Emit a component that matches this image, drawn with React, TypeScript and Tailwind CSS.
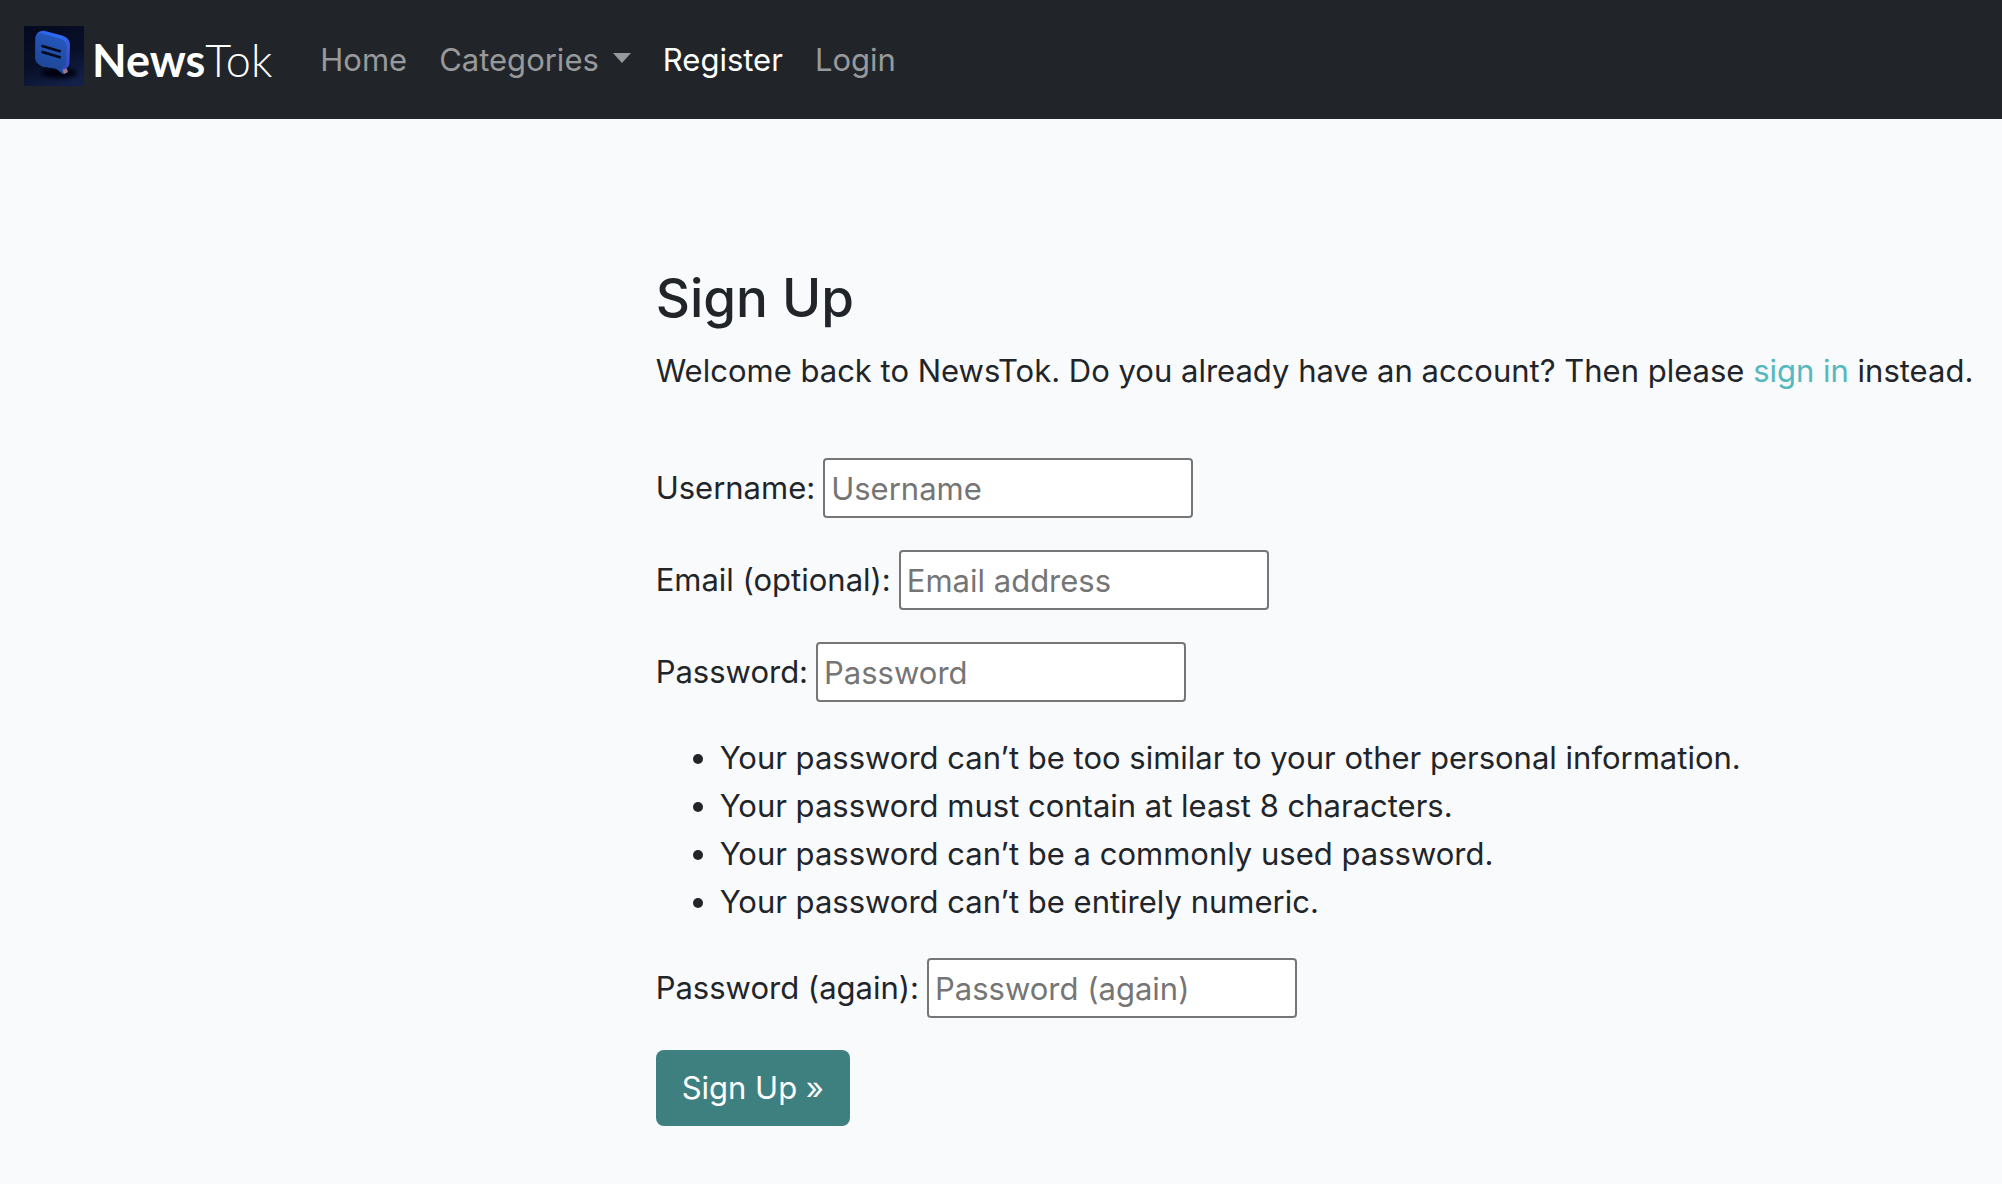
function Logo() {
  return (
    <svg viewBox="0 0 60 60" className="size-[60px] shrink-0" aria-hidden="true">
      <defs>
        <linearGradient id="night" x1="0.3" y1="0" x2="0.7" y2="1">
          <stop offset="0" stopColor="#050a20" />
          <stop offset="0.55" stopColor="#081029" />
          <stop offset="1" stopColor="#13204a" />
        </linearGradient>
        <linearGradient id="side" x1="0" y1="0" x2="1" y2="0.8">
          <stop offset="0" stopColor="#2a62e6" />
          <stop offset="0.5" stopColor="#2f6cf5" />
          <stop offset="1" stopColor="#3d48c0" />
        </linearGradient>
        <linearGradient id="face" x1="0.6" y1="0" x2="0.3" y2="1">
          <stop offset="0" stopColor="#2557be" />
          <stop offset="1" stopColor="#1c4592" />
        </linearGradient>
        <filter id="soft" x="-30%" y="-60%" width="160%" height="220%">
          <feGaussianBlur stdDeviation="2" />
        </filter>
      </defs>
      <rect width="60" height="60" fill="url(#night)" />
      <ellipse cx="35" cy="47" rx="18" ry="5" fill="#03050f" filter="url(#soft)" />
      <path
        d="M11.5 13C11.5 8 15 4 20 4.8L38 9.5C43 11 46 14 46 19L45.500 36C45.500 39 44.500 41 42.500 42L43.500 46.500L39 48L33 42.500L19 40.500C14 38 11.500 36 11.500 32Z"
        fill="url(#side)"
      />
      <path
        d="M11.500 14C11.500 9 14 6.500 18 7.500L36 12.500C40 13.600 42.700 17 42.700 21L42.300 36C42.300 39.500 40.500 42 37.500 42.500L40.500 46L38.500 47.800L32 42.800L19 40.500C14 38.500 11.500 36 11.500 32Z"
        fill="url(#face)"
      />
      <path d="M38.500 44L43 42.500L43.800 46L40 48Z" fill="#a0768c" />
      <path d="M17.500 19.800L36.800 25.400M17.500 25.800L36.800 31.600" stroke="#050a1c" strokeWidth="2.6" />
    </svg>
  );
}

function Field({ id, label, placeholder, type }: { id: string; label: string; placeholder: string; type: string }) {
  return (
    <div className="flex flex-wrap items-center gap-x-2">
      <label htmlFor={id}>{label}</label>
      <input
        id={id}
        name={id}
        type={type}
        placeholder={placeholder}
        className="h-[60px] w-[370px] max-w-full rounded border-2 border-[#767676] bg-white px-1.5 placeholder:text-[#757575] placeholder:opacity-100"
      />
    </div>
  );
}

const rules = [
  "Your password can’t be too similar to your other personal information.",
  "Your password must contain at least 8 characters.",
  "Your password can’t be a commonly used password.",
  "Your password can’t be entirely numeric.",
];

export default function App() {
  return (
    <div className="min-h-screen bg-[#f9fafc] font-['Inter',sans-serif] text-[31px] leading-[48px] text-[#212529]">
      <nav className="flex flex-wrap items-center bg-[#212529] px-6 py-[26px] text-[#98999b]">
        <a href="#" className="mr-12 flex h-[67px] items-center gap-2 text-white">
          <span className="self-start">
            <Logo />
          </span>
          <span className="font-['Lato',sans-serif] text-[45px] font-light">
            <span className="font-bold">News</span>Tok
          </span>
        </a>
        <div className="flex flex-wrap items-center gap-8">
          <a href="#home">Home</a>
          <button type="button" aria-haspopup="true" className="flex items-center gap-3.5">
            Categories
            <svg viewBox="0 0 18 10" className="mb-1 h-2.5 w-[18px]" aria-hidden="true">
              <path d="M0 0H18L9 10Z" fill="currentColor" />
            </svg>
          </button>
          <a href="#register" aria-current="page" className="text-white">
            Register
          </a>
          <a href="#login">Login</a>
        </div>
      </nav>

      <main className="ml-[32.75%] pt-[145px] pb-14">
        <h1 className="text-[53px] leading-[68px] font-medium">Sign Up</h1>
        <p className="mt-[15px]">
          Welcome back to NewsTok. Do you already have an account? Then please{" "}
          <a href="#signin" className="text-[#55b9bc]">
            sign in
          </a>{" "}
          instead.
        </p>
        <form className="mt-[63px] flex flex-col gap-8" onSubmit={(e) => e.preventDefault()}>
          <Field id="username" label="Username:" placeholder="Username" type="text" />
          <Field id="email" label="Email (optional):" placeholder="Email address" type="email" />
          <Field id="password1" label="Password:" placeholder="Password" type="password" />
          <ul className="list-disc pl-16">
            {rules.map((rule) => (
              <li key={rule}>{rule}</li>
            ))}
          </ul>
          <Field id="password2" label="Password (again):" placeholder="Password (again)" type="password" />
          <button type="submit" className="h-[76px] self-start rounded-lg bg-[#3e7f80] px-[26px] text-white">
            Sign Up »
          </button>
        </form>
      </main>
    </div>
  );
}
